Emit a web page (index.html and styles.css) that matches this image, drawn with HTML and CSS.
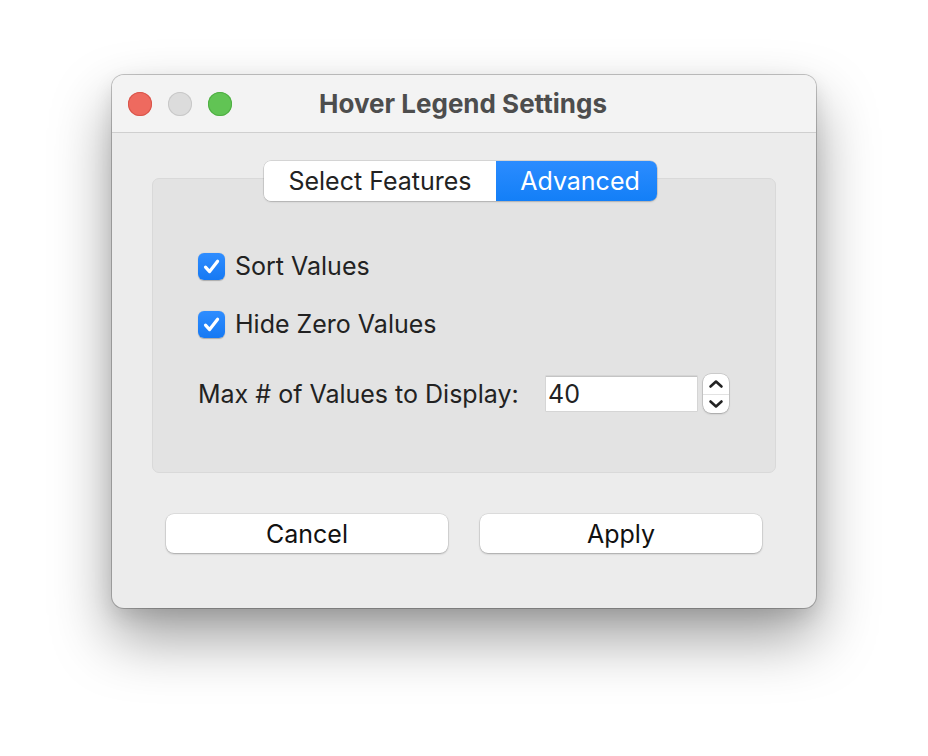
FILE: index.html
```html
<!DOCTYPE html>
<html lang="en">
<head>
    <meta charset="UTF-8">
    <meta name="viewport" content="width=device-width, initial-scale=1.0">
    <title>Hover Legend Settings</title>
    <link rel="stylesheet" href="styles.css">
</head>
<body>
    <!-- Settings dialog -->
    <div class="window">
        <div class="titlebar">
            <div class="lights">
                <span class="light close"></span>
                <span class="light min"></span>
                <span class="light zoom"></span>
            </div>
            <div class="title">Hover Legend Settings</div>
        </div>

        <div class="content">
            <div class="group">
                <div class="tabs">
                    <div class="tab">Select Features</div>
                    <div class="tab active">Advanced</div>
                </div>

                <label class="check-row first">
                    <span class="checkbox">
                        <svg viewBox="0 0 27 27" width="27" height="27">
                            <path d="M7.5 14.2 L11.6 18.6 L19.6 8.2" fill="none" stroke="#fff" stroke-width="3.2" stroke-linecap="round" stroke-linejoin="round"/>
                        </svg>
                    </span>
                    Sort Values
                </label>

                <label class="check-row">
                    <span class="checkbox">
                        <svg viewBox="0 0 27 27" width="27" height="27">
                            <path d="M7.5 14.2 L11.6 18.6 L19.6 8.2" fill="none" stroke="#fff" stroke-width="3.2" stroke-linecap="round" stroke-linejoin="round"/>
                        </svg>
                    </span>
                    Hide Zero Values
                </label>

                <div class="max-row">
                    <span class="max-label">Max # of Values to Display:</span>
                    <div class="number-input">40</div>
                    <div class="spinner">
                        <div class="step">
                            <svg viewBox="0 0 26 19" width="26" height="19">
                                <path d="M7.5 12.5 L13 7.5 L18.5 12.5" fill="none" stroke="#222" stroke-width="2.6" stroke-linecap="round" stroke-linejoin="round"/>
                            </svg>
                        </div>
                        <div class="step down">
                            <svg viewBox="0 0 26 19" width="26" height="19">
                                <path d="M7.5 6.5 L13 11.5 L18.5 6.5" fill="none" stroke="#222" stroke-width="2.6" stroke-linecap="round" stroke-linejoin="round"/>
                            </svg>
                        </div>
                    </div>
                </div>
            </div>

            <div class="buttons">
                <button class="btn">Cancel</button>
                <button class="btn">Apply</button>
            </div>
        </div>
    </div>
</body>
</html>
```

FILE: styles.css
```css
/* Page */
* {
    margin: 0;
    padding: 0;
    box-sizing: border-box;
}

body {
    font-family: 'Inter', 'Liberation Sans', sans-serif;
    background-color: #fff;
    color: #222;
    display: flex;
    justify-content: center;
    padding-top: 75px;
    height: 756px;
    overflow: hidden;
}

/* Window frame */
.window {
    width: 704px;
    height: 533px;
    border-radius: 12px;
    background-color: #ececec;
    overflow: hidden;
    box-shadow: 0 0 0 1px rgba(0, 0, 0, 0.22),
                0 30px 60px rgba(0, 0, 0, 0.38),
                0 8px 20px rgba(0, 0, 0, 0.1);
    display: flex;
    flex-direction: column;
}

.titlebar {
    height: 58px;
    background-color: #f3f3f3;
    border-bottom: 1px solid #cfcfcf;
    display: flex;
    align-items: center;
    padding-left: 16px;
}

.lights {
    display: flex;
    gap: 16px;
}

.light {
    width: 24px;
    height: 24px;
    border-radius: 50%;
    display: block;
}

.light.close {
    background-color: #ee6a5f;
    box-shadow: inset 0 0 0 1px #d8554b;
}

.light.min {
    background-color: #dcdcdc;
    box-shadow: inset 0 0 0 1px #c8c8c8;
}

.light.zoom {
    background-color: #61c454;
    box-shadow: inset 0 0 0 1px #4fae43;
}

.title {
    flex: 1;
    text-align: center;
    margin-left: -122px;
    font-size: 26px;
    font-weight: 700;
    color: #4d4d4d;
}

/* Body */
.content {
    flex: 1;
    padding: 45px 40px 0 40px;
    display: flex;
    flex-direction: column;
}

.group {
    height: 295px;
    background-color: #e3e3e3;
    border: 1px solid #d9d9d9;
    border-radius: 7px;
    padding: 0 45px;
    display: flex;
    flex-direction: column;
    align-items: flex-start;
}

/* Segmented tabs */
.tabs {
    display: flex;
    margin: -18px 0 0 111px;
    height: 40px;
    border-radius: 7px;
    box-shadow: 0 0 0 0.5px rgba(0, 0, 0, 0.18), 0 1px 2px rgba(0, 0, 0, 0.15);
    overflow: hidden;
}

.group .tabs {
    margin-left: 66px;
}

.tab {
    display: flex;
    align-items: center;
    justify-content: center;
    font-size: 25px;
    background-color: #fff;
    color: #222;
    width: 232px;
}

.tab.active {
    width: 161px;
    padding-left: 7px;
    background: linear-gradient(#2b8cff, #137ff7);
    color: #fff;
}

/* Checkboxes */
.check-row {
    display: flex;
    align-items: center;
    gap: 10px;
    font-size: 25px;
    height: 28px;
    margin-top: 30px;
}

.check-row.first {
    margin-top: 51px;
}

.checkbox {
    width: 27px;
    height: 27px;
    border-radius: 6px;
    background: linear-gradient(#2f8dff, #1679f3);
    box-shadow: 0 0.5px 1px rgba(0, 0, 0, 0.25);
    display: flex;
}

/* Max values row */
.max-row {
    display: flex;
    align-items: center;
    margin-top: 36px;
    font-size: 25px;
}

.max-label {
    width: 348px;
}

.number-input {
    width: 151px;
    height: 35px;
    background-color: #fff;
    border-top: 1px solid #c4c4c4;
    box-shadow: 0 0 0 0.5px rgba(0, 0, 0, 0.12);
    padding-left: 2px;
    display: flex;
    align-items: center;
}

.spinner {
    margin-left: 6px;
    width: 26px;
    height: 39px;
    background-color: #fff;
    border-radius: 8px;
    box-shadow: 0 0 0 0.5px rgba(0, 0, 0, 0.2), 0 1px 2px rgba(0, 0, 0, 0.2);
    display: flex;
    flex-direction: column;
}

.step {
    height: 19.5px;
    display: flex;
}

.step.down {
    border-top: 1px solid #e2e2e2;
}

/* Dialog buttons */
.buttons {
    display: flex;
    gap: 32px;
    padding: 0 14px;
    margin-top: 41px;
}

.btn {
    width: 282px;
    height: 39px;
    border: none;
    border-radius: 8px;
    background-color: #fff;
    font-family: inherit;
    font-size: 25px;
    color: #111;
    box-shadow: 0 0 0 0.5px rgba(0, 0, 0, 0.12), 0 1px 2px rgba(0, 0, 0, 0.25);
}
```
